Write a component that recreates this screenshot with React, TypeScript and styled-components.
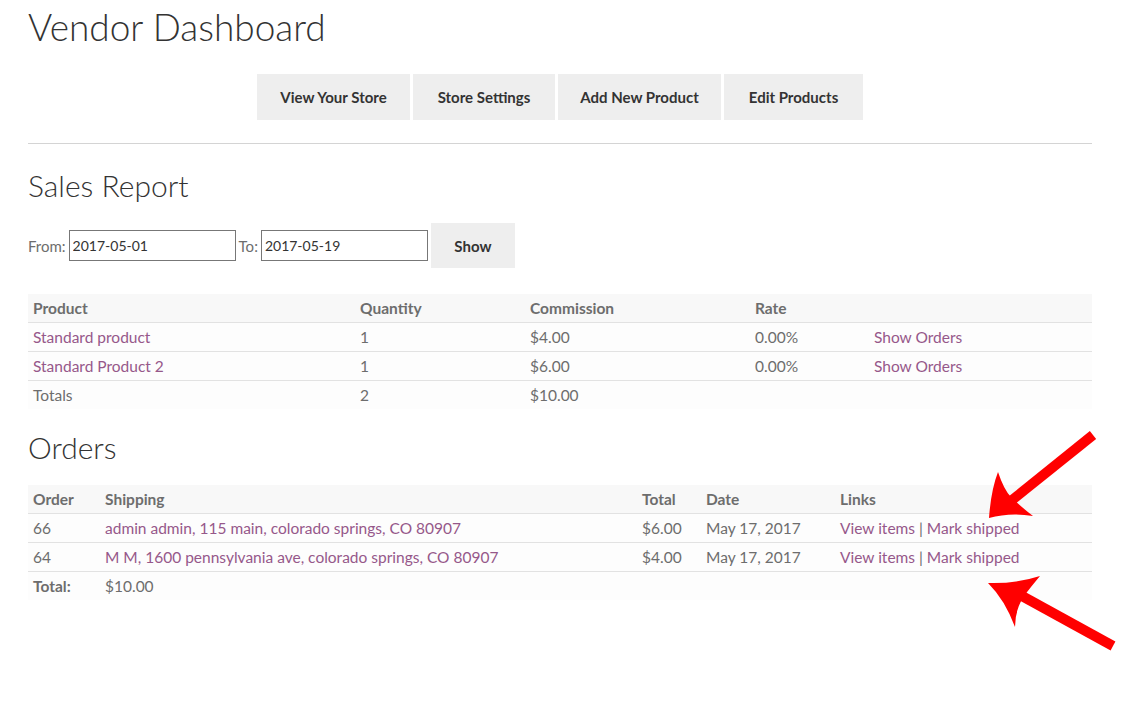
import React from 'react';
import styled, { createGlobalStyle } from 'styled-components';

const Colors = {
    Heading: '#333333',
    Text: '#6d6d6d',
    Link: '#96588a',
    Button: '#eeeeee',
    Rule: '#d4d4d4',
    HeadRow: '#f8f8f8',
    BodyRow: '#fdfdfd',
    Border: '#e2e2e2',
};

const GlobalStyle = createGlobalStyle`
    html, body {
        margin: 0;
        padding: 0;
        background: #fff;
    }
    body {
        font-family: Lato, "Open Sans", sans-serif;
        font-size: 15px;
        color: ${Colors.Text};
    }
`;

const Page = styled.div`
    position: relative;
    box-sizing: border-box;
    width: 1092px;
    min-height: 716px;
    padding: 5px 0 0 28px;
`;

const Title = styled.h1`
    margin: 0;
    font-size: 37px;
    font-weight: 300;
    line-height: 44px;
    color: ${Colors.Heading};
`;

const Nav = styled.nav`
    display: flex;
    justify-content: center;
    gap: 3px;
    margin-top: 25px;
    padding-bottom: 23px;
    border-bottom: 1px solid ${Colors.Rule};
`;

const NavButton = styled.a<{ $w: number }>`
    display: flex;
    align-items: center;
    justify-content: center;
    width: ${p => p.$w}px;
    height: 46px;
    background: ${Colors.Button};
    color: ${Colors.Heading};
    font-weight: 700;
    font-size: 15px;
    cursor: pointer;
`;

const SectionTitle = styled.h2<{ $top: number }>`
    margin: ${p => p.$top}px 0 0;
    font-size: 30px;
    font-weight: 300;
    line-height: 36px;
    color: ${Colors.Heading};
`;

const Filter = styled.form`
    display: flex;
    align-items: center;
    margin-top: 20px;
    font-size: 15px;
`;

const Label = styled.label`
    margin-right: 3px;
`;

const DateInput = styled.input`
    box-sizing: border-box;
    width: 167px;
    height: 31px;
    margin-right: 3px;
    padding: 0 3px;
    border: 1px solid #777;
    font-family: inherit;
    font-size: 14px;
    color: ${Colors.Heading};
    background: #fff;
`;

const ShowButton = styled.button`
    width: 84px;
    height: 45px;
    border: none;
    background: ${Colors.Button};
    color: ${Colors.Heading};
    font-family: inherit;
    font-weight: 700;
    font-size: 15px;
    cursor: pointer;
`;

const Table = styled.table<{ $top: number }>`
    width: 100%;
    margin-top: ${p => p.$top}px;
    border-collapse: collapse;
    table-layout: fixed;
    font-size: 15.5px;
`;

const Th = styled.th<{ $w?: number }>`
    width: ${p => (p.$w ? `${p.$w - 10}px` : 'auto')};
    height: 28px;
    padding: 0 5px;
    text-align: left;
    font-weight: 700;
    color: ${Colors.Text};
    background: ${Colors.HeadRow};
    border-bottom: 1px solid ${Colors.Border};
`;

const Td = styled.td<{ $bold?: boolean; $last?: boolean }>`
    height: 28px;
    padding: 0 5px;
    font-weight: ${p => (p.$bold ? 700 : 400)};
    background: ${Colors.BodyRow};
    border-bottom: ${p => (p.$last ? 'none' : `1px solid ${Colors.Border}`)};
    white-space: nowrap;
`;

const Link = styled.a`
    color: ${Colors.Link};
    text-decoration: none;
    cursor: pointer;
`;

const Sep = styled.span`
    color: ${Colors.Text};
`;

const Overlay = styled.svg`
    position: absolute;
    left: 0;
    top: 0;
    pointer-events: none;
`;

const Arrows = () => (
    <Overlay width="1141" height="716" viewBox="0 0 1141 716">
        <g fill="#ff0000" stroke="none">
            <line x1="1093" y1="435" x2="1006" y2="505" stroke="#ff0000" strokeWidth="10" />
            <path d="M989 518 Q991 490 998 472 Q1004 490 1011 497 Q1020 506 1033 516 Q1010 512 989 518 Z" />
            <line x1="1113" y1="646" x2="1022" y2="596" stroke="#ff0000" strokeWidth="10" />
            <path d="M988 583 Q1015 584 1040 576 Q1030 588 1024 596 Q1015 610 1015 627 Q1005 600 988 583 Z" />
        </g>
    </Overlay>
);

const products = [
    { name: 'Standard product', qty: '1', commission: '$4.00', rate: '0.00%' },
    { name: 'Standard Product 2', qty: '1', commission: '$6.00', rate: '0.00%' },
];

const orders = [
    { id: '66', ship: 'admin admin, 115 main, colorado springs, CO 80907', total: '$6.00', date: 'May 17, 2017' },
    { id: '64', ship: 'M M, 1600 pennsylvania ave, colorado springs, CO 80907', total: '$4.00', date: 'May 17, 2017' },
];

export default function App() {
    return (
        <Page>
            <GlobalStyle />
            <Title>Vendor Dashboard</Title>
            <Nav>
                <NavButton $w={153}>View Your Store</NavButton>
                <NavButton $w={142}>Store Settings</NavButton>
                <NavButton $w={163}>Add New Product</NavButton>
                <NavButton $w={139}>Edit Products</NavButton>
            </Nav>

            <SectionTitle $top={23}>Sales Report</SectionTitle>
            <Filter onSubmit={e => e.preventDefault()}>
                <Label>From:</Label>
                <DateInput defaultValue="2017-05-01" />
                <Label>To:</Label>
                <DateInput defaultValue="2017-05-19" />
                <ShowButton type="submit">Show</ShowButton>
            </Filter>

            <Table $top={26}>
                <thead>
                    <tr>
                        <Th $w={327}>Product</Th>
                        <Th $w={170}>Quantity</Th>
                        <Th $w={225}>Commission</Th>
                        <Th $w={119}>Rate</Th>
                        <Th></Th>
                    </tr>
                </thead>
                <tbody>
                    {products.map(p => (
                        <tr key={p.name}>
                            <Td><Link>{p.name}</Link></Td>
                            <Td>{p.qty}</Td>
                            <Td>{p.commission}</Td>
                            <Td>{p.rate}</Td>
                            <Td><Link>Show Orders</Link></Td>
                        </tr>
                    ))}
                    <tr>
                        <Td $last>Totals</Td>
                        <Td $last>2</Td>
                        <Td $last>$10.00</Td>
                        <Td $last></Td>
                        <Td $last></Td>
                    </tr>
                </tbody>
            </Table>

            <SectionTitle $top={20}>Orders</SectionTitle>
            <Table $top={20}>
                <thead>
                    <tr>
                        <Th $w={72}>Order</Th>
                        <Th $w={537}>Shipping</Th>
                        <Th $w={64}>Total</Th>
                        <Th $w={134}>Date</Th>
                        <Th>Links</Th>
                    </tr>
                </thead>
                <tbody>
                    {orders.map(o => (
                        <tr key={o.id}>
                            <Td>{o.id}</Td>
                            <Td><Link>{o.ship}</Link></Td>
                            <Td>{o.total}</Td>
                            <Td>{o.date}</Td>
                            <Td>
                                <Link>View items</Link> <Sep>|</Sep> <Link>Mark shipped</Link>
                            </Td>
                        </tr>
                    ))}
                    <tr>
                        <Td $bold $last>Total:</Td>
                        <Td $last>$10.00</Td>
                        <Td $last></Td>
                        <Td $last></Td>
                        <Td $last></Td>
                    </tr>
                </tbody>
            </Table>
            <Arrows />
        </Page>
    );
}
